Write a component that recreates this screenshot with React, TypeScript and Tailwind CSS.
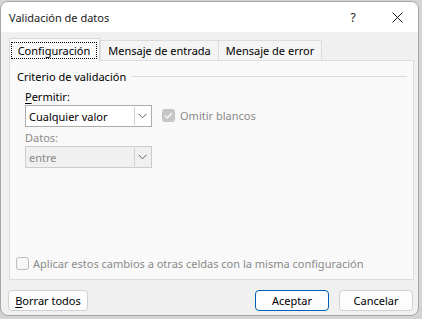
import React from "react";

function Chevron({ color = "#5f5f5f" }: { color?: string }) {
  return (
    <svg width="9" height="6" viewBox="0 0 9 6">
      <path d="M0.5 0.8 L4.5 4.8 L8.5 0.8" fill="none" stroke={color} strokeWidth="1" />
    </svg>
  );
}

function Select({ value, disabled }: { value: string; disabled?: boolean }) {
  return (
    <div
      className={
        disabled
          ? "flex h-[22px] w-[127px] items-stretch border border-[#cccccc] bg-[#f0f0f0]"
          : "flex h-[22px] w-[127px] items-stretch border border-[#adadad] bg-white"
      }
    >
      <div
        className={
          disabled
            ? "flex flex-1 items-center pl-[3px] text-[#8a8a8a]"
            : "flex flex-1 items-center pl-[3px] text-[#000000]"
        }
      >
        {value}
      </div>
      <div className="my-px mr-px flex w-[16px] items-center justify-center border-l border-[#cfcfcf]">
        <Chevron />
      </div>
    </div>
  );
}

export default function App() {
  return (
    <div
      className="h-[319px] w-[422px] overflow-hidden bg-[#d4d4d4] pt-px text-[11px] leading-[15px] text-[#000000]"
      style={{ fontFamily: '"Noto Sans", "Open Sans", sans-serif' }}
    >
      <div className="flex h-[315px] w-[419px] flex-col overflow-hidden rounded-[8px] border border-[#a6a6a6] bg-[#f0f0f0]">
        {/* Title bar */}
        <div className="flex h-[30px] items-center bg-white">
          <div className="flex-1 pl-[8px] text-[11px] text-[#1a1a1a]">Validación de datos</div>
          <div className="flex h-full w-[46px] items-center justify-center text-[12px] text-[#1a1a1a]">?</div>
          <div className="flex h-full w-[42px] items-center justify-center">
            <svg width="11" height="11" viewBox="0 0 11 11">
              <path d="M0.5 0.5 L10.5 10.5 M10.5 0.5 L0.5 10.5" stroke="#1a1a1a" strokeWidth="1" />
            </svg>
          </div>
        </div>

        {/* Body */}
        <div className="flex flex-col px-[8px] pt-[6px]">
          {/* Tabs */}
          <div className="flex h-[22px] items-end">
            <div className="relative z-10 -mb-px flex h-[23px] w-[91px] items-start border border-b-0 border-[#d9d9d9] bg-[#f9f9f9] pl-px pt-[3px]">
              <span className="flex h-[17px] w-[86px] items-center justify-center border border-dotted border-[#000000]">
                Configuración
              </span>
            </div>
            <div className="flex h-[20px] w-[119px] items-center justify-center border border-b-0 border-[#dcdcdc] bg-[#f4f4f4]">
              Mensaje de entrada
            </div>
            <div className="-ml-px flex h-[20px] w-[104px] items-center justify-center border border-b-0 border-[#dcdcdc] bg-[#f4f4f4]">
              Mensaje de error
            </div>
          </div>

          {/* Panel */}
          <div className="flex h-[220px] w-[405px] flex-col border border-[#dcdcdc] bg-[#f9f9f9]">
            <div className="mt-[8px] flex items-center pl-[7px] pr-[6px]">
              <span>Criterio de validación</span>
              <div className="ml-[6px] h-px flex-1 bg-[#dcdcdc]" />
            </div>

            <div className="mt-[5px] pl-[15px]">
              <span className="underline underline-offset-2">P</span>ermitir:
            </div>
            <div className="mt-px flex items-start pl-[15px]">
              <Select value="Cualquier valor" />
              <div className="ml-[10px] mt-[3px] flex items-center">
                <div className="flex h-[13px] w-[13px] items-center justify-center rounded-[3px] bg-[#c6c6c6]">
                  <svg width="9" height="7" viewBox="0 0 9 7">
                    <path d="M1 3.6 L3.4 6 L8 1" fill="none" stroke="#ffffff" strokeWidth="1.2" />
                  </svg>
                </div>
                <span className="ml-[5px] text-[#8a8a8a]">Omitir blancos</span>
              </div>
            </div>

            <div className="mt-[3px] pl-[15px] text-[#8a8a8a]">Datos:</div>
            <div className="mt-px pl-[15px]">
              <Select value="entre" disabled />
            </div>

            <div className="mt-auto mb-[8px] flex items-center pl-[6px]">
              <div className="h-[13px] w-[13px] rounded-[3px] border border-[#bdbdbd] bg-[#f7f7f7]" />
              <span className="ml-[4px] text-[#8a8a8a]">
                Aplicar estos cambios a otras celdas con la misma configuración
              </span>
            </div>
          </div>
        </div>

        {/* Buttons */}
        <div className="mt-[10px] flex items-center pl-[7px] pr-[5px]">
          <button className="flex h-[21px] w-[80px] items-center justify-center rounded-[4px] border border-[#d0d0d0] bg-[#fdfdfd]">
            <span className="underline underline-offset-2">B</span>orrar todos
          </button>
          <div className="flex-1" />
          <button className="flex h-[21px] w-[74px] items-center justify-center rounded-[4px] border border-[#005fb8] bg-[#fdfdfd]">
            Aceptar
          </button>
          <button className="ml-[10px] flex h-[21px] w-[74px] items-center justify-center rounded-[4px] border border-[#d0d0d0] bg-[#fdfdfd]">
            Cancelar
          </button>
        </div>
      </div>
    </div>
  );
}
